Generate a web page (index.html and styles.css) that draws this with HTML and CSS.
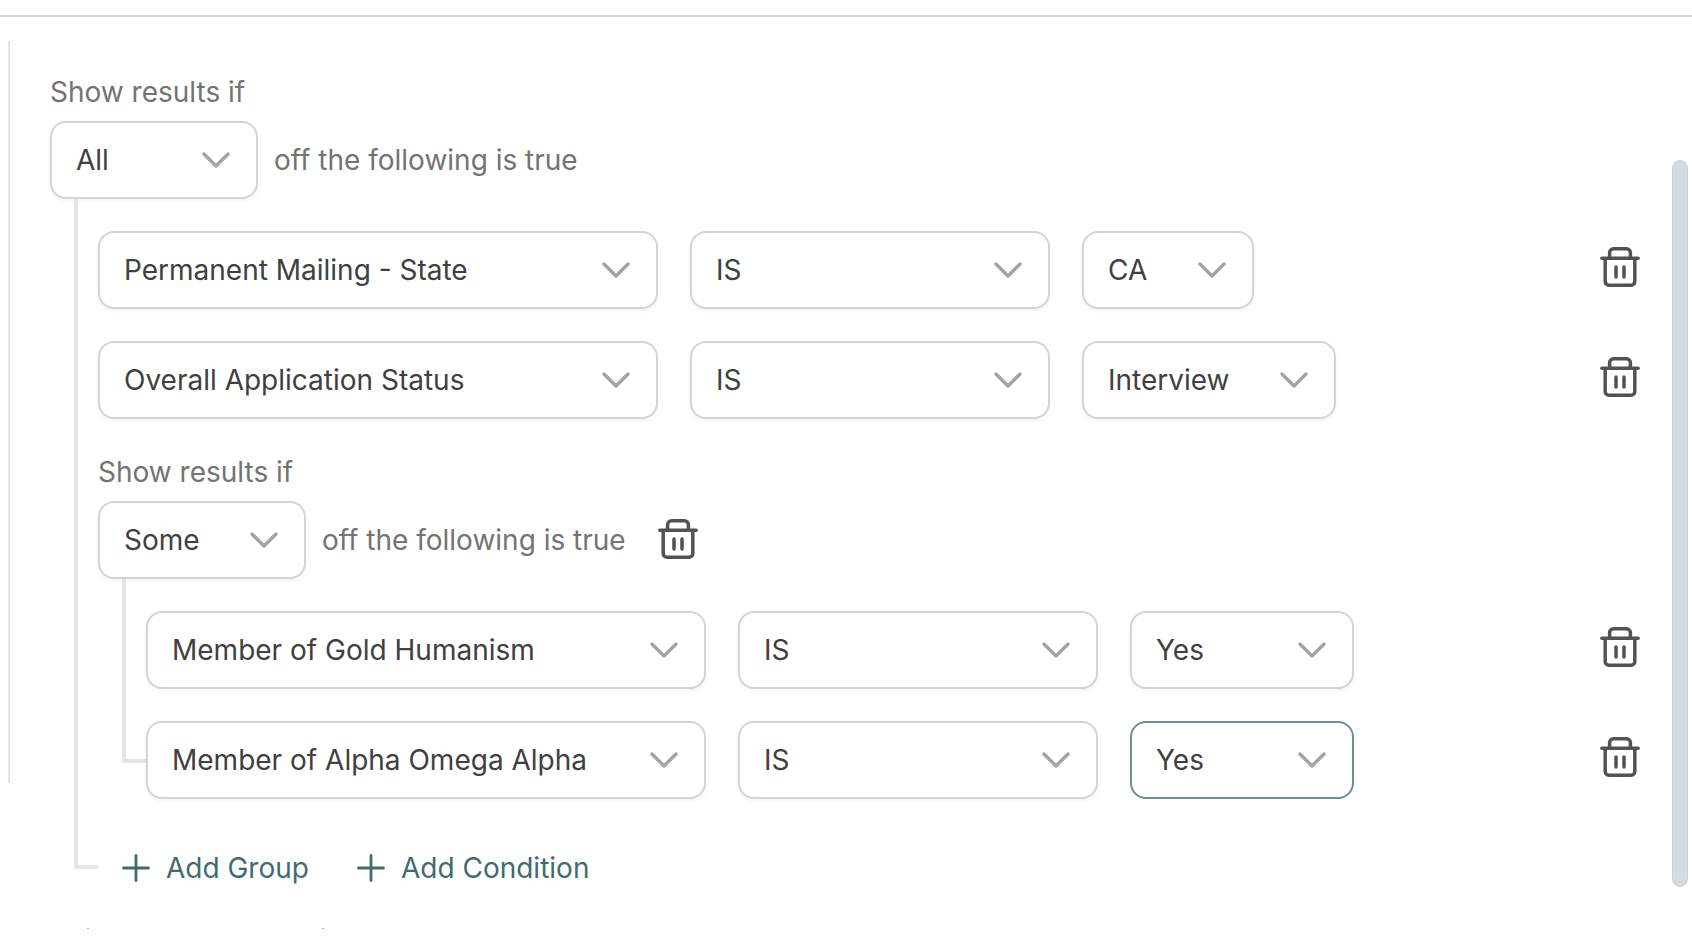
FILE: index.html
```html
<!DOCTYPE html>
<html lang="en">
  <head>
    <meta charset="UTF-8" />
    <meta name="viewport" content="width=device-width, initial-scale=1.0" />
    <title>Filter results</title>
    <link rel="stylesheet" href="styles.css">
  </head>
  <body>
    <svg class="sprite" aria-hidden="true">
      <symbol id="icon-trash" viewBox="0 0 40 40">
        <path d="M1.8 11.2H38.2M9.6 10.5V5.8a4 4 0 0 1 4-4h12.8a4 4 0 0 1 4 4v4.7M5.2 11.5v23a3.7 3.7 0 0 0 3.7 3.7h22.2a3.7 3.7 0 0 0 3.7-3.7v-23M16 20v10M24 20v10" />
      </symbol>
      <symbol id="icon-plus" viewBox="0 0 28 28">
        <path d="M14 1.5v25M1.5 14h25" />
      </symbol>
    </svg>

    <div class="topbar"></div>
    <main class="panel">
      <div class="divider"></div>

      <div class="builder">
        <section class="group">
          <label class="group-label" for="match-outer">Show results if</label>
          <div class="group-head">
            <select class="select select-match" id="match-outer"><option>All</option></select>
            <span class="hint">off the following is true</span>
          </div>
          <div class="group-body">
            <div class="branch"></div>
            <div class="rules">
              <div class="rule">
                <select class="select select-field" aria-label="Field"><option>Permanent Mailing - State</option></select>
                <select class="select select-operator" aria-label="Operator"><option>IS</option></select>
                <select class="select select-state" aria-label="Value"><option>CA</option></select>
                <button class="remove" type="button" aria-label="Delete condition"><svg class="icon-trash"><use href="#icon-trash" /></svg></button>
              </div>
              <div class="rule">
                <select class="select select-field" aria-label="Field"><option>Overall Application Status</option></select>
                <select class="select select-operator" aria-label="Operator"><option>IS</option></select>
                <select class="select select-status" aria-label="Value"><option>Interview</option></select>
                <button class="remove" type="button" aria-label="Delete condition"><svg class="icon-trash"><use href="#icon-trash" /></svg></button>
              </div>

              <section class="group">
                <label class="group-label" for="match-inner">Show results if</label>
                <div class="group-head">
                  <select class="select select-match" id="match-inner"><option>Some</option></select>
                  <span class="hint">off the following is true</span>
                  <button class="remove-group" type="button" aria-label="Delete group"><svg class="icon-trash"><use href="#icon-trash" /></svg></button>
                </div>
                <div class="group-body">
                  <div class="branch"></div>
                  <div class="rules">
                    <div class="rule">
                      <select class="select select-field" aria-label="Field"><option>Member of Gold Humanism</option></select>
                      <select class="select select-operator" aria-label="Operator"><option>IS</option></select>
                      <select class="select select-answer" aria-label="Value"><option>Yes</option></select>
                      <button class="remove" type="button" aria-label="Delete condition"><svg class="icon-trash"><use href="#icon-trash" /></svg></button>
                    </div>
                    <div class="rule">
                      <select class="select select-field" aria-label="Field"><option>Member of Alpha Omega Alpha</option></select>
                      <select class="select select-operator" aria-label="Operator"><option>IS</option></select>
                      <select class="select select-answer active" aria-label="Value"><option>Yes</option></select>
                      <button class="remove" type="button" aria-label="Delete condition"><svg class="icon-trash"><use href="#icon-trash" /></svg></button>
                    </div>
                  </div>
                </div>
              </section>

              <div class="actions">
                <button class="add" type="button"><svg class="icon-plus"><use href="#icon-plus" /></svg>Add Group</button>
                <button class="add" type="button"><svg class="icon-plus"><use href="#icon-plus" /></svg>Add Condition</button>
              </div>
            </div>
          </div>
        </section>

        <!-- only the tips of the next row's icons show before the panel cuts off -->
        <div class="cutoff" aria-hidden="true"><span class="tip"></span><span class="tip"></span></div>
      </div>

      <div class="scroll-thumb"></div>
    </main>
  </body>
</html>
```

FILE: styles.css
```css
* {
  box-sizing: border-box;
}
body {
  margin: 0;
  background: #fff;
  color: #404040;
  font-family: Inter, "Liberation Sans", sans-serif;
  font-size: 28px;
  line-height: 42px;
}
button,
select {
  font: inherit;
}
.sprite {
  display: none;
}
.topbar {
  height: 17px;
  border-bottom: 2px solid #d4d4d4;
}
.panel {
  display: flex;
  padding: 24px 4px 0 8px;
}
.divider {
  flex: none;
  width: 2px;
  margin-bottom: 146px;
  background: #e5e5e5;
}
.builder {
  flex: 1;
  min-width: 0;
  padding: 30px 32px 0 40px;
}
.scroll-thumb {
  flex: none;
  width: 16px;
  margin: 119px 0 42px;
  border: 1px solid #cdd1d6;
  border-radius: 8px;
  background: #d7dbe0;
}

/* groups */
.group-label {
  display: block;
  margin-bottom: 8px;
  color: #737373;
}
.group-head {
  display: flex;
  align-items: center;
}
.hint {
  margin-left: 16px;
  color: #737373;
}
.group-body {
  display: flex;
}
.branch {
  flex: none;
  width: 24px;
  margin: 0 0 36px 24px;
  border-left: 4px solid #e5e5e5;
  border-bottom: 4px solid #e5e5e5;
}
.rules {
  flex: 1;
  min-width: 0;
  display: flex;
  flex-direction: column;
  gap: 32px;
  padding-top: 32px;
}
.rule {
  display: flex;
  align-items: center;
  gap: 32px;
}

/* controls */
.select {
  flex: none;
  height: 78px;
  padding: 0 72px 0 24px;
  border: 2px solid #d4d4d4;
  border-radius: 16px;
  appearance: none;
  background: #fff url("data:image/svg+xml,%3Csvg xmlns='http://www.w3.org/2000/svg' width='28' height='18' fill='none' stroke='%23a3a3a3' stroke-width='3.4' stroke-linecap='round' stroke-linejoin='round'%3E%3Cpath d='M2 3l12 12L26 3'/%3E%3C/svg%3E") no-repeat right 26px center;
  box-shadow: 0 2px 4px rgba(0, 0, 0, 0.05);
  color: #404040;
  outline: none;
}
.select.active {
  border-color: #6b9097;
  box-shadow: none;
}
.select-match {
  width: 208px;
}
.select-field {
  width: 560px;
}
.select-operator {
  width: 360px;
}
.select-state {
  width: 172px;
}
.select-status {
  width: 254px;
}
.select-answer {
  width: 224px;
}
.remove,
.remove-group {
  display: flex;
  padding: 0;
  border: none;
  background: none;
  color: #525252;
  cursor: pointer;
}
.remove {
  margin-left: auto;
  padding-bottom: 6px;
}
.remove-group {
  margin-left: 32px;
  padding-bottom: 2px;
}
.icon-trash {
  width: 40px;
  height: 40px;
  fill: none;
  stroke: currentColor;
  stroke-width: 3.5;
  stroke-linecap: round;
  stroke-linejoin: round;
}
.actions {
  display: flex;
  align-items: center;
  gap: 48px;
  height: 74px;
  padding-left: 24px;
}
.add {
  display: flex;
  align-items: center;
  gap: 16px;
  padding: 0;
  border: none;
  background: none;
  color: #3f6b73;
  cursor: pointer;
}
.icon-plus {
  width: 28px;
  height: 28px;
  fill: none;
  stroke: currentColor;
  stroke-width: 2.8;
  stroke-linecap: round;
}
.cutoff {
  display: flex;
  gap: 233px;
  margin-top: 23px;
  padding-left: 37px;
}
.tip {
  width: 2px;
  height: 1px;
  background: #9fb5b9;
}
```
